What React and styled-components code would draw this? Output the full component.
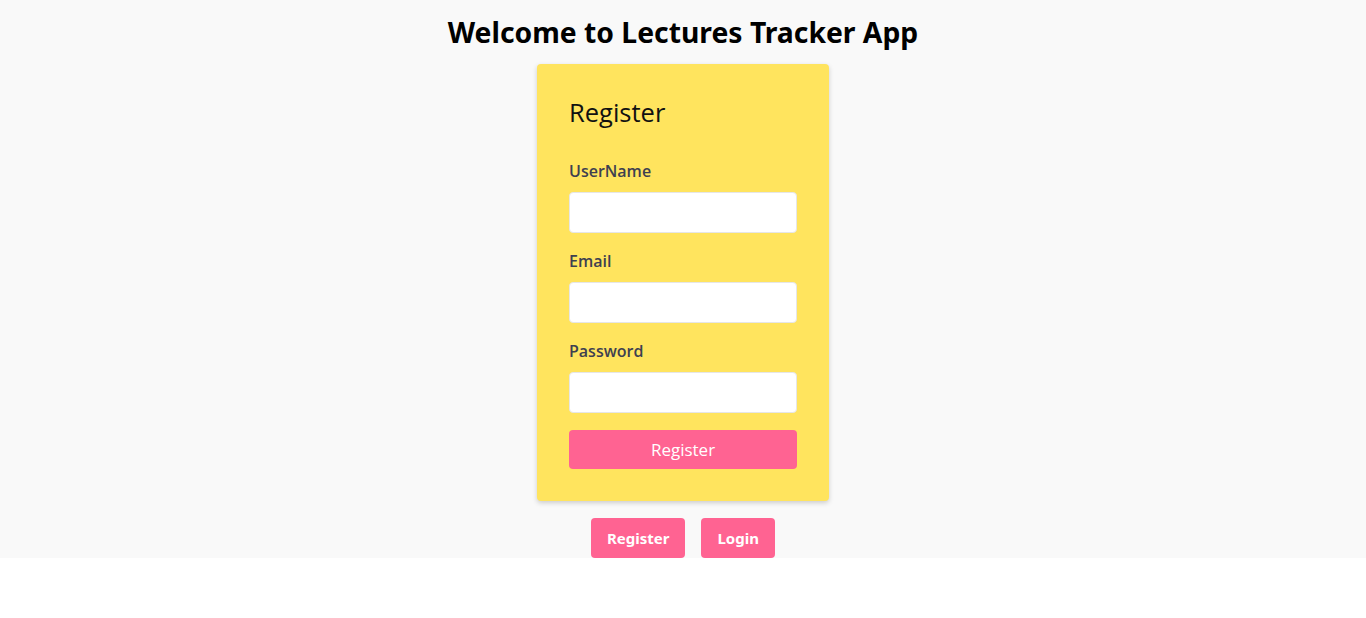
import React from 'react';
import styled, { createGlobalStyle } from 'styled-components';

const GlobalStyle = createGlobalStyle`
  body {
    margin: 0;
    background: #ffffff;
    font-family: "Noto Sans", "Open Sans", sans-serif;
  }
  * {
    box-sizing: border-box;
  }
`;

const Page = styled.div`
  display: flex;
  flex-direction: column;
  align-items: center;
  background-color: #f9f9f9;
`;

const Title = styled.h1`
  margin: 0;
  height: 64px;
  line-height: 64px;
  font-family: "Noto Sans", sans-serif;
  font-size: 28.3px;
  font-weight: 700;
  color: #000;
`;

const Card = styled.form`
  width: 292px;
  padding: 32px;
  display: flex;
  flex-direction: column;
  background-color: #ffe45e;
  border-radius: 4px;
  box-shadow: 0 2px 5px rgba(0, 0, 0, 0.18);
  font-family: "Open Sans", sans-serif;
`;

const CardTitle = styled.h2`
  margin: 0 0 31px;
  line-height: 32px;
  font-size: 25.5px;
  font-weight: 500;
  color: #111;
`;

const Label = styled.label`
  display: block;
  line-height: 24px;
  font-size: 16px;
  font-weight: 600;
  color: #3e4050;
  margin-bottom: 9px;
`;

const Field = styled.div`
  display: flex;
  flex-direction: column;
  margin-bottom: ${(p) => (p.$last ? '17px' : '16px')};
`;

const Input = styled.input`
  width: 100%;
  height: 41px;
  border: 1px solid #e6e6e6;
  border-radius: 4px;
  background: #fff;
  font-size: 16px;
  padding: 0 10px;
  outline: none;
`;

const SubmitButton = styled.button`
  height: 39px;
  border: none;
  border-radius: 4px;
  background-color: #ff6392;
  color: #fff;
  font-family: "Open Sans", sans-serif;
  font-size: 17px;
  cursor: pointer;
`;

const Switcher = styled.div`
  display: flex;
  gap: 16px;
  margin-top: 17px;
`;

const SwitchButton = styled.button`
  height: 40px;
  padding: 0 16px;
  border: none;
  border-radius: 4px;
  background-color: #ff6392;
  color: #fff;
  font-family: "Noto Sans", sans-serif;
  font-size: 15px;
  font-weight: 700;
  cursor: pointer;
`;

const fields = [
  { label: 'UserName', type: 'text' },
  { label: 'Email', type: 'email' },
  { label: 'Password', type: 'password' },
];

export default function App() {
  return (
    <>
      <GlobalStyle />
      <Page>
        <Title>Welcome to Lectures Tracker App</Title>
        <Card onSubmit={(e) => e.preventDefault()}>
          <CardTitle>Register</CardTitle>
          {fields.map((f, i) => (
            <Field key={f.label} $last={i === fields.length - 1}>
              <Label>{f.label}</Label>
              <Input type={f.type} />
            </Field>
          ))}
          <SubmitButton type="submit">Register</SubmitButton>
        </Card>
        <Switcher>
          <SwitchButton>Register</SwitchButton>
          <SwitchButton>Login</SwitchButton>
        </Switcher>
      </Page>
    </>
  );
}
